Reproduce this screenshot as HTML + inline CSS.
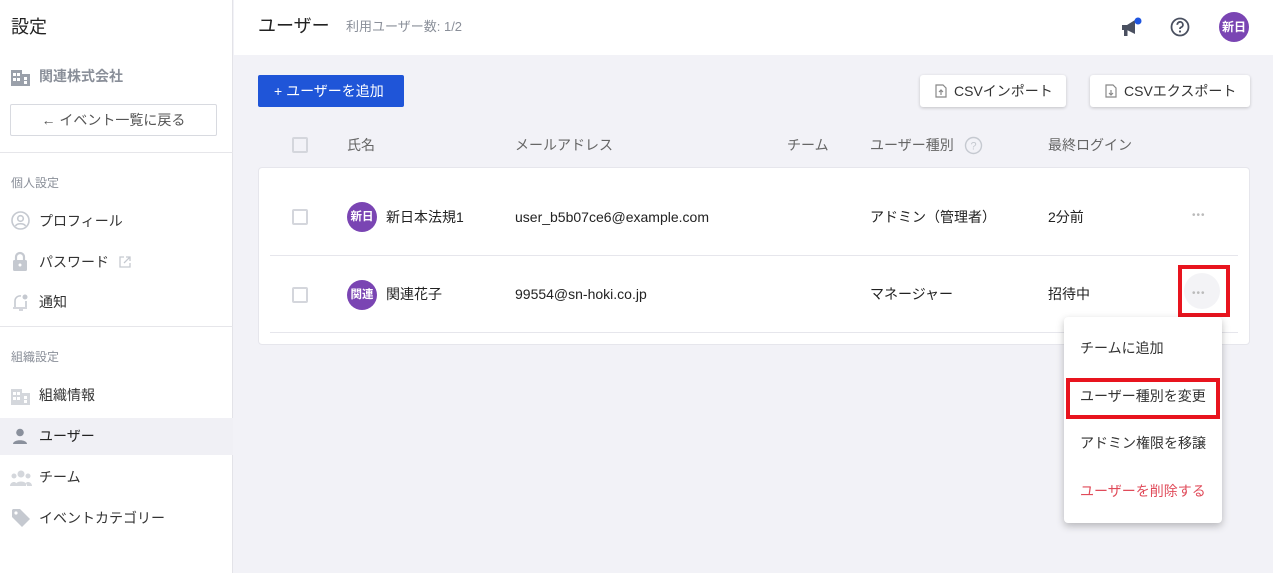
<!DOCTYPE html>
<html><head><meta charset="utf-8">
<style>
*{box-sizing:border-box;margin:0;padding:0}
body{width:1273px;height:573px;overflow:hidden;font-family:"Liberation Sans","Noto Sans CJK JP",sans-serif;font-size:14px;color:#222;background:#f2f2f7;position:relative}
.a{position:absolute;white-space:nowrap;line-height:20px}
.side{position:absolute;left:0;top:0;width:233px;height:573px;background:#fff;border-right:1px solid #e3e3e8}
.gray{color:#8a8f99}
.hdr{position:absolute;left:234px;top:0;width:1039px;height:55px;background:#fff}
.btn{position:absolute;background:#fff;border-radius:3px;box-shadow:0 1px 3px rgba(0,0,0,.2);font-size:14px;color:#333}
.cb{position:absolute;width:16px;height:16px;border:2px solid #d4d6dc;border-radius:2px;background:#fff}
.av{position:absolute;width:30px;height:30px;border-radius:50%;background:#7a45b3;color:#fff;font-size:11.5px;font-weight:bold;text-align:center;line-height:30px}
.t{font-size:14px;color:#333}
</style></head><body>
<div class="side">
  <div class="a" style="left:11px;top:17px;font-size:18px;color:#222">設定</div>
  <svg class="a" style="left:11px;top:68px" width="19" height="18" viewBox="0 0 19 18"><path fill="#9aa0aa" d="M0 2h11v16H0zM11 6h8v12h-8z"/><g fill="#fff"><rect x="2" y="5" width="3" height="3"/><rect x="6" y="5" width="3" height="3"/><rect x="2" y="10" width="3" height="3"/><rect x="6" y="10" width="3" height="3"/><rect x="13" y="9" width="3" height="3"/><rect x="13" y="13" width="3" height="3"/></g></svg>
  <div class="a" style="left:39px;top:66px;font-size:14px;font-weight:bold;color:#8a8f99">関連株式会社</div>
  <div class="a" style="left:10px;top:104px;width:207px;height:32px;border:1px solid #d8dae0;border-radius:2px;text-align:center;line-height:30px;color:#555;font-size:14px">← イベント一覧に戻る</div>
  <div class="a" style="left:0;top:152px;width:233px;height:1px;background:#e6e6ea"></div>
  <div class="a gray" style="left:11px;top:173px;font-size:12px">個人設定</div>
  <svg class="a" style="left:11px;top:211px" width="19" height="19" viewBox="0 0 19 19"><circle cx="9.5" cy="9.5" r="8.5" fill="none" stroke="#c5c9d0" stroke-width="1.6"/><circle cx="9.5" cy="7.5" r="2.8" fill="none" stroke="#c5c9d0" stroke-width="1.6"/><path d="M4.5 15c1.5-3 8.5-3 10 0" fill="none" stroke="#c5c9d0" stroke-width="1.6"/></svg>
  <div class="a t" style="left:39px;top:211px">プロフィール</div>
  <svg class="a" style="left:12px;top:251px" width="16" height="20" viewBox="0 0 16 20"><path d="M4 9V6a4 4 0 0 1 8 0v3" fill="none" stroke="#c5c9d0" stroke-width="2.2"/><rect x="1" y="9" width="14" height="11" rx="1.5" fill="#c5c9d0"/><circle cx="8" cy="14" r="1.5" fill="#fff"/></svg>
  <div class="a t" style="left:39px;top:252px">パスワード</div>
  <svg class="a" style="left:119px;top:256px" width="12" height="12" viewBox="0 0 12 12"><path d="M5 1H1v10h10V7M7 1h4v4M11 1 5 7" fill="none" stroke="#c5c9d0" stroke-width="1.3"/></svg>
  <svg class="a" style="left:12px;top:292px" width="18" height="20" viewBox="0 0 18 20"><path d="M3 15V9a5 5 0 0 1 6-5M1 16h14M7 18h4" fill="none" stroke="#c5c9d0" stroke-width="1.6"/><circle cx="13" cy="5" r="2.5" fill="#c5c9d0"/><path d="M14 9v6" stroke="#c5c9d0" stroke-width="1.6"/></svg>
  <div class="a t" style="left:39px;top:292px">通知</div>
  <div class="a" style="left:0;top:326px;width:233px;height:1px;background:#e6e6ea"></div>
  <div class="a gray" style="left:11px;top:347px;font-size:12px">組織設定</div>
  <svg class="a" style="left:11px;top:387px" width="19" height="18" viewBox="0 0 19 18"><path fill="#d4d7dc" d="M0 2h11v16H0zM11 6h8v12h-8z"/><g fill="#fff"><rect x="2" y="5" width="3" height="3"/><rect x="6" y="5" width="3" height="3"/><rect x="2" y="10" width="3" height="3"/><rect x="6" y="10" width="3" height="3"/><rect x="13" y="9" width="3" height="3"/><rect x="13" y="13" width="3" height="3"/></g></svg>
  <div class="a t" style="left:39px;top:385px">組織情報</div>
  <div class="a" style="left:0;top:418px;width:233px;height:37px;background:#f0f0f5"></div>
  <svg class="a" style="left:12px;top:428px" width="16" height="16" viewBox="0 0 16 16"><circle cx="8" cy="4.5" r="3.8" fill="#8a909c"/><path d="M1 16c0-5 14-5 14 0z" fill="#8a909c"/></svg>
  <div class="a" style="left:39px;top:426px;font-size:14px;color:#222">ユーザー</div>
  <svg class="a" style="left:10px;top:469px" width="22" height="17" viewBox="0 0 22 17"><circle cx="11" cy="5" r="3.5" fill="#d4d7dc"/><circle cx="4" cy="7" r="2.5" fill="#d4d7dc"/><circle cx="18" cy="7" r="2.5" fill="#d4d7dc"/><path d="M5 17c0-6 12-6 12 0zM0 17c0-4 5-5 6-3v3zM22 17c0-4-5-5-6-3v3z" fill="#d4d7dc"/></svg>
  <div class="a t" style="left:39px;top:467px">チーム</div>
  <svg class="a" style="left:11px;top:508px" width="20" height="20" viewBox="0 0 20 20"><path d="M1 2v7l10 10 8-8L9 1H2z" fill="#c5c9d0"/><circle cx="5" cy="5" r="1.6" fill="#fff"/></svg>
  <div class="a t" style="left:39px;top:508px">イベントカテゴリー</div>
</div>

<div class="hdr">
  <div class="a" style="left:24px;top:16px;font-size:18px;color:#222">ユーザー</div>
  <div class="a" style="left:112px;top:17px;font-size:13px;color:#8a8f99">利用ユーザー数: 1/2</div>
  <svg class="a" style="left:886px;top:17px" width="22" height="22" viewBox="0 0 22 22"><path d="M2 8h5l8-5v14l-8-4H2z" fill="#4a5060"/><rect x="4" y="13" width="3.5" height="6" fill="#4a5060"/><circle cx="18" cy="4" r="3.5" fill="#1f55e0"/></svg>
  <svg class="a" style="left:936px;top:17px" width="20" height="20" viewBox="0 0 20 20"><circle cx="10" cy="10" r="8.5" fill="none" stroke="#4a5060" stroke-width="1.8"/><path d="M7.3 7.8a2.8 2.8 0 1 1 3.6 2.6c-.7.3-.9.8-.9 1.6" fill="none" stroke="#4a5060" stroke-width="1.8"/><circle cx="10" cy="14.5" r="1.1" fill="#4a5060"/></svg>
  <div class="av" style="left:985px;top:12px;font-size:12px">新日</div>
</div>

<div class="a" style="left:258px;top:75px;width:146px;height:32px;background:#1f55d8;border-radius:2px;color:#fff;font-size:14px;line-height:32px;padding-left:16px">+ ユーザーを追加</div>
<div class="btn" style="left:920px;top:75px;width:146px;height:32px;line-height:32px;padding-left:34px">CSVインポート</div>
<svg class="a" style="left:935px;top:84px" width="12" height="14" viewBox="0 0 12 14"><path d="M1 1h7l3 3v9H1z" fill="none" stroke="#888" stroke-width="1.2"/><path d="M6 11V6M4 8l2-2 2 2" fill="none" stroke="#888" stroke-width="1.2"/></svg>
<div class="btn" style="left:1090px;top:75px;width:160px;height:32px;line-height:32px;padding-left:34px">CSVエクスポート</div>
<svg class="a" style="left:1105px;top:84px" width="12" height="14" viewBox="0 0 12 14"><path d="M1 1h7l3 3v9H1z" fill="none" stroke="#888" stroke-width="1.2"/><path d="M6 6v5M4 9l2 2 2-2" fill="none" stroke="#888" stroke-width="1.2"/></svg>

<div class="cb" style="left:292px;top:137px;background:#f2f2f7"></div>
<div class="a" style="left:347px;top:135px;color:#666">氏名</div>
<div class="a" style="left:515px;top:135px;color:#666">メールアドレス</div>
<div class="a" style="left:787px;top:135px;color:#666">チーム</div>
<div class="a" style="left:870px;top:135px;color:#666">ユーザー種別</div>
<svg class="a" style="left:964px;top:136px" width="19" height="19" viewBox="0 0 19 19"><circle cx="9.5" cy="9.5" r="8" fill="none" stroke="#c5c9d0" stroke-width="1.4"/><text x="9.5" y="13.5" font-size="11" text-anchor="middle" fill="#c5c9d0" font-family="Liberation Sans">?</text></svg>
<div class="a" style="left:1048px;top:135px;color:#666">最終ログイン</div>

<div class="a" style="left:258px;top:167px;width:992px;height:178px;background:#fff;border:1px solid #e6e6ec;border-radius:4px"></div>
<div class="a" style="left:270px;top:255px;width:968px;height:1px;background:#e6e6ec"></div>
<div class="a" style="left:270px;top:332px;width:968px;height:1px;background:#e6e6ec"></div>

<div class="cb" style="left:292px;top:209px"></div>
<div class="av" style="left:347px;top:202px">新日</div>
<div class="a" style="left:386px;top:207px;font-size:14px">新日本法規1</div>
<div class="a" style="left:515px;top:207px;font-size:14px">user_b5b07ce6@example.com</div>
<div class="a" style="left:870px;top:207px;font-size:14px">アドミン（管理者）</div>
<div class="a" style="left:1048px;top:207px;font-size:14px">2分前</div>
<div class="a" style="left:1192px;top:206px;color:#bbb;font-size:10px;letter-spacing:1px">•••</div>

<div class="cb" style="left:292px;top:287px"></div>
<div class="av" style="left:347px;top:280px">関連</div>
<div class="a" style="left:386px;top:284px;font-size:14px">関連花子</div>
<div class="a" style="left:515px;top:284px;font-size:14px">99554@sn-hoki.co.jp</div>
<div class="a" style="left:870px;top:284px;font-size:14px">マネージャー</div>
<div class="a" style="left:1048px;top:284px;font-size:14px">招待中</div>
<div class="a" style="left:1178px;top:265px;width:52px;height:52px;border:4px solid #e8141e"></div>
<div class="a" style="left:1184px;top:273px;width:36px;height:36px;border-radius:50%;background:#f3f3f6"></div>
<div class="a" style="left:1192px;top:284px;color:#bbb;font-size:10px;letter-spacing:1px">•••</div>

<div class="a" style="left:1064px;top:317px;width:158px;height:206px;background:#fff;border-radius:4px;box-shadow:0 3px 8px rgba(0,0,0,.25)"></div>
<div class="a t" style="left:1080px;top:338px">チームに追加</div>
<div class="a" style="left:1066px;top:378px;width:154px;height:41px;border:4px solid #e8141e"></div>
<div class="a t" style="left:1080px;top:386px">ユーザー種別を変更</div>
<div class="a t" style="left:1080px;top:433px">アドミン権限を移譲</div>
<div class="a" style="left:1080px;top:481px;font-size:14px;color:#e04b5a">ユーザーを削除する</div>
</body></html>
